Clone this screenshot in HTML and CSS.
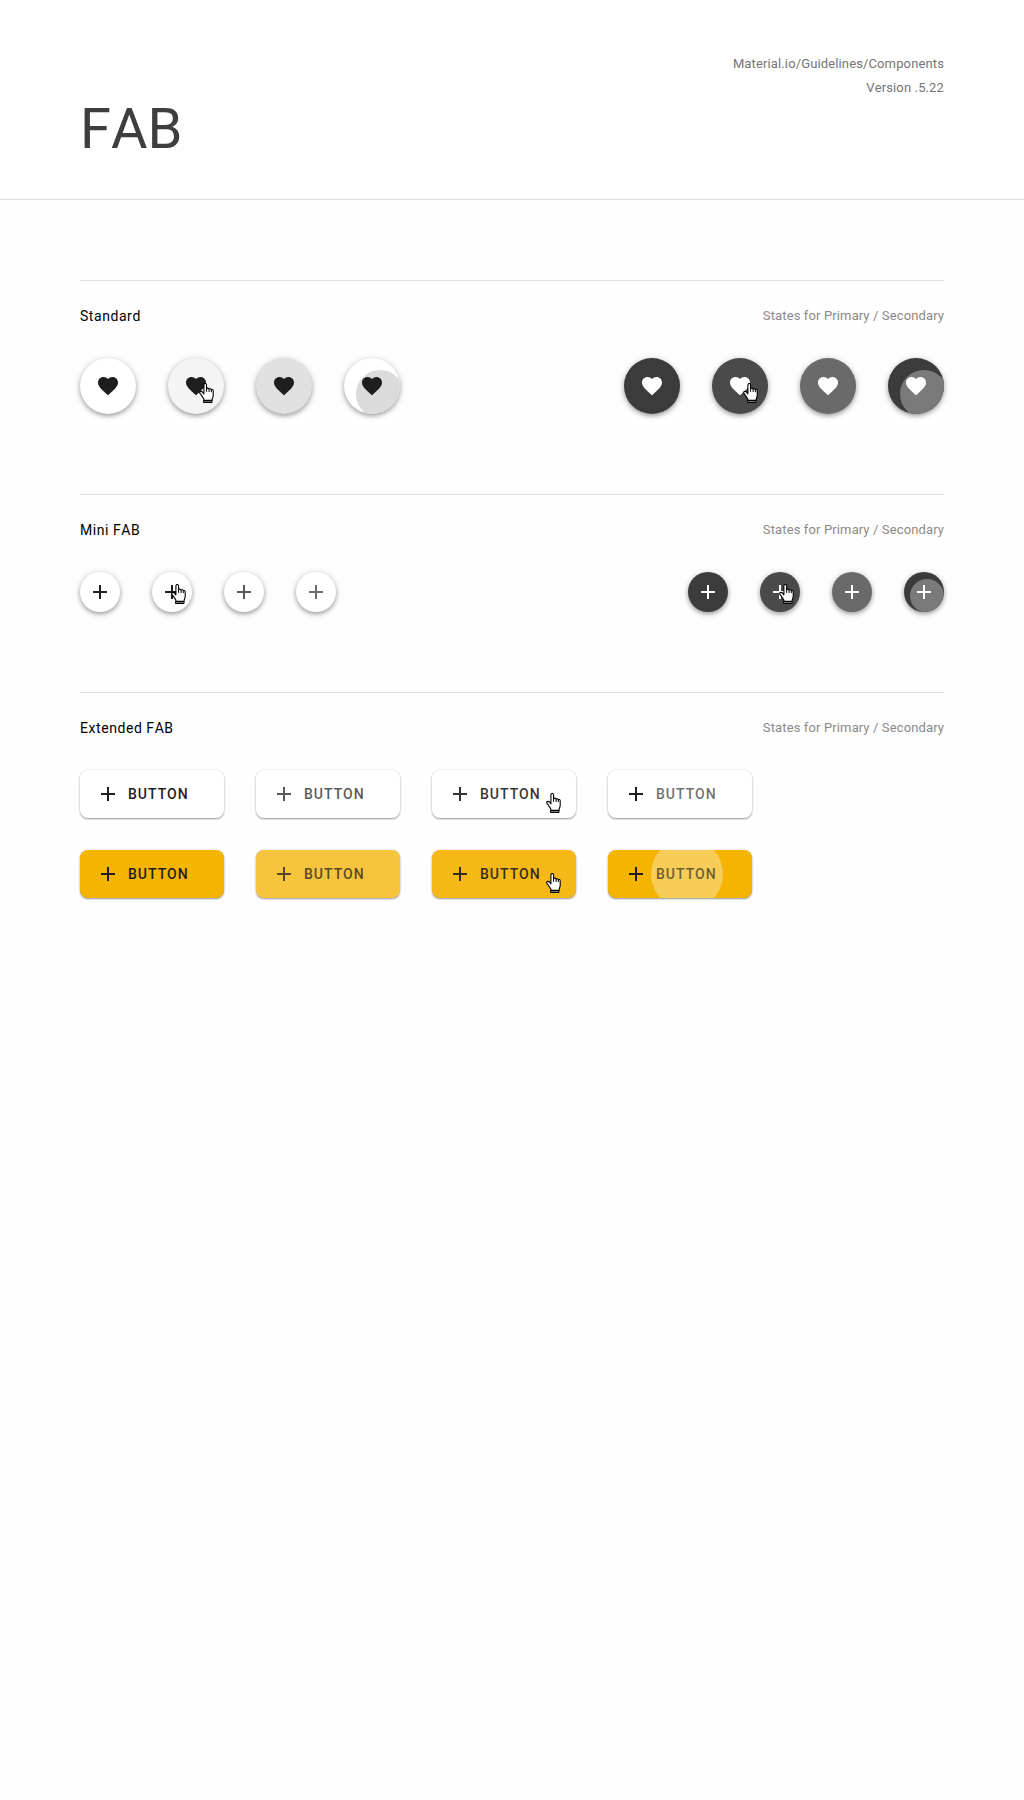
FILE: index.html
```html
<!DOCTYPE html>
<html lang="en">
<head>
<meta charset="utf-8">
<meta name="viewport" content="width=device-width, initial-scale=1">
<title>FAB</title>
<link rel="stylesheet" href="styles.css">
</head>
<body>
<svg class="sprite" aria-hidden="true">
  <symbol id="heart" viewBox="0 0 24 24"><path d="M12 21.35l-1.45-1.32C5.4 15.36 2 12.28 2 8.5 2 5.42 4.42 3 7.5 3c1.74 0 3.41.81 4.5 2.09C13.09 3.81 14.76 3 16.5 3 19.58 3 22 5.42 22 8.5c0 3.78-3.4 6.86-8.55 11.54L12 21.35z"/></symbol>
  <symbol id="plus" viewBox="0 0 24 24"><path d="M19 13h-6v6h-2v-6H5v-2h6V5h2v6h6v2z"/></symbol>
  <symbol id="hand" viewBox="0 0 15 20">
    <path d="M4.5 17.5h8.5v2H4.500z" fill="#777" stroke="#000" stroke-width="1"/>
    <path d="M4.9 10.800V2c0-2 2.600-2 2.700 0v3.800c.4-1 2.300-.9 2.500.4.5-.8 2-.6 2.200.5.6-.5 1.900-.2 1.900 1.100v4.400c0 2-1 2.600-1.200 5.200H5.200c-.2-2-1.600-3.100-2.500-4.700C1.900 11.200.5 10.600.6 9.500c.2-1.500 2-1.500 3-.3z" fill="#fff" stroke="#000" stroke-width="1.100" stroke-linejoin="round"/>
    <path d="M7.600 5.800v3M10.100 6.200v2.800M12.300 6.800v2.400" fill="none" stroke="#000" stroke-width="1"/>
  </symbol>
</svg>

<header class="page-header">
  <h1 class="page-title">FAB</h1>
  <p class="page-meta">Material.io/Guidelines/Components<br>Version .5.22</p>
</header>

<main class="content">
  <section class="group">
    <div class="group-head"><h2 class="group-title">Standard</h2><p class="group-note">States for Primary / Secondary</p></div>
    <div class="states">
      <div class="row">
        <button class="fab" aria-label="Favorite"><svg class="icon"><use href="#heart"/></svg></button>
        <button class="fab hover" aria-label="Favorite, hover"><svg class="icon"><use href="#heart"/></svg><svg class="hand"><use href="#hand"/></svg></button>
        <button class="fab focus" aria-label="Favorite, focus"><svg class="icon"><use href="#heart"/></svg></button>
        <button class="fab" aria-label="Favorite, pressed"><span class="clip"><span class="ripple"></span></span><svg class="icon"><use href="#heart"/></svg></button>
      </div>
      <div class="row">
        <button class="fab dark" aria-label="Favorite"><svg class="icon"><use href="#heart"/></svg></button>
        <button class="fab dark hover" aria-label="Favorite, hover"><svg class="icon"><use href="#heart"/></svg><svg class="hand"><use href="#hand"/></svg></button>
        <button class="fab dark focus" aria-label="Favorite, focus"><svg class="icon"><use href="#heart"/></svg></button>
        <button class="fab dark" aria-label="Favorite, pressed"><span class="clip"><span class="ripple"></span></span><svg class="icon"><use href="#heart"/></svg></button>
      </div>
    </div>
  </section>

  <section class="group">
    <div class="group-head"><h2 class="group-title">Mini FAB</h2><p class="group-note">States for Primary / Secondary</p></div>
    <div class="states">
      <div class="row">
        <button class="fab mini" aria-label="Add"><svg class="icon"><use href="#plus"/></svg></button>
        <button class="fab mini" aria-label="Add, hover"><svg class="icon"><use href="#plus"/></svg><svg class="hand"><use href="#hand"/></svg></button>
        <button class="fab mini" aria-label="Add, focus"><svg class="icon soft"><use href="#plus"/></svg></button>
        <button class="fab mini" aria-label="Add, pressed"><svg class="icon faint"><use href="#plus"/></svg></button>
      </div>
      <div class="row">
        <button class="fab mini dark" aria-label="Add"><svg class="icon"><use href="#plus"/></svg></button>
        <button class="fab mini dark hover" aria-label="Add, hover"><svg class="icon"><use href="#plus"/></svg><svg class="hand"><use href="#hand"/></svg></button>
        <button class="fab mini dark focus" aria-label="Add, focus"><svg class="icon"><use href="#plus"/></svg></button>
        <button class="fab mini dark" aria-label="Add, pressed"><span class="clip"><span class="ripple"></span></span><svg class="icon"><use href="#plus"/></svg></button>
      </div>
    </div>
  </section>

  <section class="group">
    <div class="group-head"><h2 class="group-title">Extended FAB</h2><p class="group-note">States for Primary / Secondary</p></div>
    <div class="stack">
      <div class="row">
        <button class="extended"><svg class="icon"><use href="#plus"/></svg><span>BUTTON</span></button>
        <button class="extended"><svg class="icon soft"><use href="#plus"/></svg><span class="soft">BUTTON</span></button>
        <button class="extended"><svg class="icon dim"><use href="#plus"/></svg><span class="dim">BUTTON</span><svg class="hand"><use href="#hand"/></svg></button>
        <button class="extended"><svg class="icon"><use href="#plus"/></svg><span class="faint">BUTTON</span></button>
      </div>
      <div class="row">
        <button class="extended amber"><svg class="icon"><use href="#plus"/></svg><span>BUTTON</span></button>
        <button class="extended amber focus"><svg class="icon soft"><use href="#plus"/></svg><span class="soft">BUTTON</span></button>
        <button class="extended amber hover"><svg class="icon dim"><use href="#plus"/></svg><span class="dim">BUTTON</span><svg class="hand"><use href="#hand"/></svg></button>
        <button class="extended amber"><span class="clip"><span class="ripple"></span></span><svg class="icon"><use href="#plus"/></svg><span class="faint">BUTTON</span></button>
      </div>
    </div>
  </section>
</main>
</body>
</html>
```
FILE: styles.css
```css
* {
  box-sizing: border-box;
}

body {
  margin: 0;
  min-height: 100vh;
  background: #fefefe;
  color: #000;
  font-family: Roboto, "Liberation Sans", sans-serif;
  font-kerning: none;
}

h1, h2, p {
  margin: 0;
  font-weight: 400;
}

.sprite {
  display: none;
}

.page-header {
  display: flex;
  justify-content: space-between;
  align-items: flex-start;
  padding: 52px 80px 34px;
  background: #fff;
  border-bottom: 1px solid #dedede;
}

.page-title {
  padding-top: 41px;
  font-size: 56px;
  line-height: 72px;
  color: #3e3e3e;
}

.page-meta {
  font-size: 13px;
  line-height: 24px;
  letter-spacing: .01em;
  text-align: right;
  color: #757575;
}

.content {
  padding: 80px;
}

.group {
  border-top: 1px solid #dedede;
  margin-bottom: 80px;
}

.group-head {
  display: flex;
  justify-content: space-between;
  align-items: center;
  padding: 23px 0 30px;
  line-height: 24px;
}

.group-title {
  font-size: 14px;
  letter-spacing: .04em;
}

.group-note {
  font-size: 13px;
  letter-spacing: .01em;
  color: #8a8a8a;
}

.states {
  display: flex;
  flex-wrap: wrap;
  justify-content: space-between;
  gap: 32px;
}

.stack {
  display: grid;
  gap: 32px;
}

.row {
  display: flex;
  flex-wrap: wrap;
  gap: 32px;
}

.icon {
  position: relative;
  width: 24px;
  height: 24px;
  fill: currentColor;
}

.hand {
  position: absolute;
  left: 31px;
  top: 25px;
  width: 15px;
  height: 20px;
}

.clip {
  position: absolute;
  inset: 0;
  overflow: hidden;
  border-radius: inherit;
}

.ripple {
  position: absolute;
  left: 12px;
  top: 12px;
  width: 48px;
  height: 48px;
  border-radius: 50%;
  background: #dbdbdb;
}

.fab {
  position: relative;
  display: flex;
  align-items: center;
  justify-content: center;
  width: 56px;
  height: 56px;
  padding: 0;
  border: 0;
  border-radius: 50%;
  background: #fff;
  color: #1e1e1e;
  box-shadow: 0 2px 4px rgba(0, 0, 0, .32), 0 1px 10px rgba(0, 0, 0, .12);
}

.fab.hover {
  background: #f4f4f4;
}

.fab.focus {
  background: #e0e0e0;
}

.fab.dark {
  background: #3b3b3b;
  color: #fff;
}

.fab.dark.hover {
  background: #4a4a4a;
}

.fab.dark.focus {
  background: #6a6a6a;
}

.dark .ripple {
  background: #7a7a7a;
}

.mini {
  width: 40px;
  height: 40px;
}

.mini .hand {
  left: 19px;
  top: 12px;
}

.mini .ripple {
  left: 6px;
  top: 7px;
  width: 34px;
  height: 34px;
}

.dim {
  opacity: .9;
}

.soft {
  opacity: .74;
}

.faint {
  opacity: .64;
}

.extended {
  position: relative;
  display: flex;
  align-items: center;
  gap: 8px;
  width: 144px;
  height: 48px;
  padding: 0 16px;
  border: 0;
  border-radius: 8px;
  background: #fff;
  color: #1e1e1e;
  font: 500 14px/24px Roboto, "Liberation Sans", sans-serif;
  letter-spacing: 1px;
  box-shadow: 0 1px 2px rgba(0, 0, 0, .4), 0 0 2px rgba(0, 0, 0, .08);
}

.extended .hand {
  left: 114px;
  top: 23px;
}

.extended .ripple {
  left: 43px;
  top: -12px;
  width: 72px;
  height: 72px;
  background: #f7cd58;
}

.amber {
  background: #f5b400;
}

.amber.hover {
  background: #f5b816;
}

.amber.focus {
  background: #f7c43e;
}
```
